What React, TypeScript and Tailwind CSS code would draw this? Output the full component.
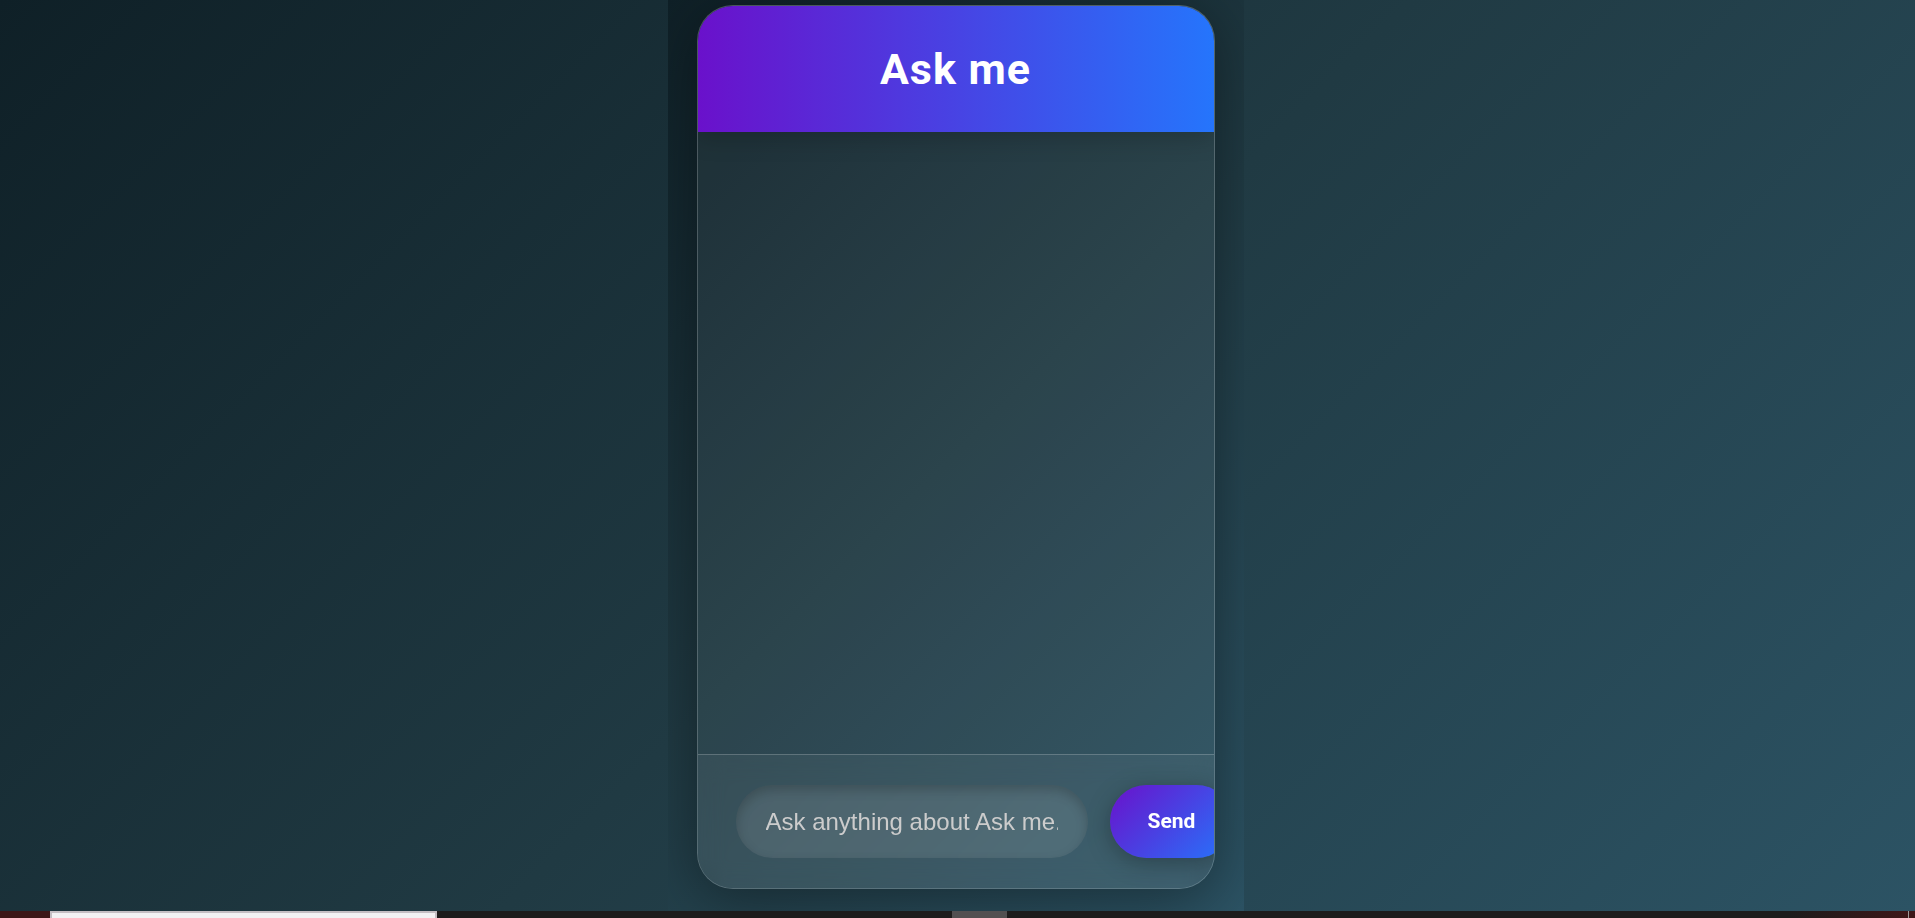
import React from "react";

function Header() {
  return (
    <header className="relative flex h-[126px] shrink-0 items-center justify-center bg-linear-to-r/srgb from-[#6a11cb] to-[#2575fc] shadow-[0_5px_24px_rgba(0,0,0,0.2)]">
      <h1 className="font-[Roboto,sans-serif] text-[43px] leading-[52px] font-bold tracking-[1px] text-white">
        Ask me
      </h1>
    </header>
  );
}

function Composer() {
  return (
    <form
      className="flex shrink-0 gap-[22px] border-t border-white/20 bg-white/5 px-[38px] py-[30px] backdrop-blur-md"
      onSubmit={(e) => e.preventDefault()}
    >
      <input
        type="text"
        aria-label="Question"
        placeholder="Ask anything about Ask me..."
        className="h-[73px] w-[352px] shrink-0 rounded-full bg-white/10 px-[30px] font-[Liberation_Sans,Arial,sans-serif] text-2xl text-white shadow-[inset_0_5px_12px_rgba(0,0,0,0.2)] outline-none placeholder:text-[#cccccc]"
      />
      <button
        type="submit"
        className="h-[73px] shrink-0 rounded-full bg-linear-135/srgb from-[#6a11cb] to-[#2575fc] px-[38px] font-[Roboto,sans-serif] text-[21px] font-bold text-white shadow-[0_5px_24px_rgba(0,0,0,0.3)]"
      >
        Send
      </button>
    </form>
  );
}

function Taskbar() {
  return (
    <div className="flex h-[7px] shrink-0 overflow-hidden bg-[#1d1c1c]">
      <div className="w-[50px] bg-[#3d1718]" />
      <div className="w-[387px] border-x-2 border-t-2 border-[#c4bec3] bg-[#f2f1f3]" />
      <div className="ml-[515px] w-[55px] bg-[#525051]" />
      <div className="ml-auto w-[120px] bg-linear-to-r/srgb from-[#1d1c1c] to-[#3d1718]" />
      <div className="w-px bg-[#a09a9a]" />
      <div className="w-[6px] bg-[#3d1718]" />
    </div>
  );
}

export default function App() {
  return (
    <div className="flex h-screen flex-col overflow-hidden">
      <div className="flex min-h-0 flex-1 justify-center bg-linear-135/srgb from-[#0f2027] via-[#203a43] to-[#2c5364] pr-[4px]">
        <main className="flex w-full max-w-[576px] justify-center overflow-hidden bg-linear-135/srgb from-[#0f2027] via-[#203a43] to-[#2c5364] px-[29px] pt-[5px] pb-[22px]">
          <section className="flex w-full flex-col overflow-hidden rounded-[36px] border border-white/20 bg-white/5 shadow-[0_10px_60px_rgba(0,0,0,0.4)]">
            <Header />
            <div className="flex-1" />
            <Composer />
          </section>
        </main>
      </div>
      <Taskbar />
    </div>
  );
}
